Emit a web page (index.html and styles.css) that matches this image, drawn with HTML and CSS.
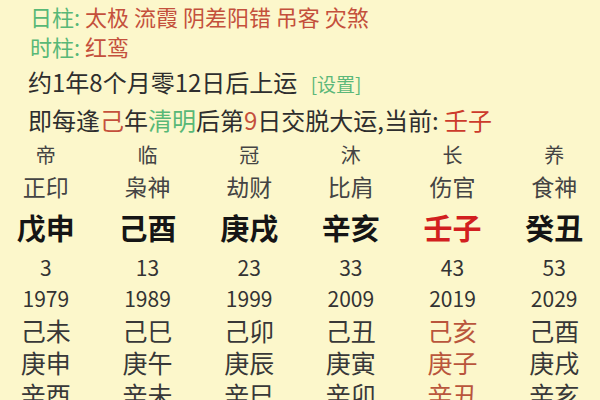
FILE: index.html
```html
<!DOCTYPE html>
<html lang="zh-CN">
<head>
<meta charset="utf-8">
<link rel="stylesheet" href="styles.css">
</head>
<body>
<div class="page">
  <div class="shensha">
    <div class="line"><span class="green">日柱:</span> <span class="red">太极 流霞 阴差阳错 吊客 灾煞</span></div>
    <div class="line"><span class="green">时柱:</span> <span class="red">红鸾</span></div>
  </div>
  <div class="yun">
    <div class="line">约1年8个月零12日后上运 <span class="setting">[设置]</span></div>
    <div class="line">即每逢<span class="red">己</span>年<span class="green">清明</span>后第<span class="red">9</span>日交脱大运,当前: <span class="red cur">壬子</span></div>
  </div>
  <div class="grid">
    <div class="col">
      <div class="c stage">帝</div>
      <div class="c god">正印</div>
      <div class="c gz">戊申</div>
      <div class="c num">3</div>
      <div class="c num">1979</div>
      <div class="c yr">己未</div>
      <div class="c yr">庚申</div>
      <div class="c yr">辛酉</div>
    </div>
    <div class="col">
      <div class="c stage">临</div>
      <div class="c god">枭神</div>
      <div class="c gz">己酉</div>
      <div class="c num">13</div>
      <div class="c num">1989</div>
      <div class="c yr">己巳</div>
      <div class="c yr">庚午</div>
      <div class="c yr">辛未</div>
    </div>
    <div class="col">
      <div class="c stage">冠</div>
      <div class="c god">劫财</div>
      <div class="c gz">庚戌</div>
      <div class="c num">23</div>
      <div class="c num">1999</div>
      <div class="c yr">己卯</div>
      <div class="c yr">庚辰</div>
      <div class="c yr">辛巳</div>
    </div>
    <div class="col">
      <div class="c stage">沐</div>
      <div class="c god">比肩</div>
      <div class="c gz">辛亥</div>
      <div class="c num">33</div>
      <div class="c num">2009</div>
      <div class="c yr">己丑</div>
      <div class="c yr">庚寅</div>
      <div class="c yr">辛卯</div>
    </div>
    <div class="col current">
      <div class="c stage">长</div>
      <div class="c god">伤官</div>
      <div class="c gz">壬子</div>
      <div class="c num">43</div>
      <div class="c num">2019</div>
      <div class="c yr">己亥</div>
      <div class="c yr">庚子</div>
      <div class="c yr">辛丑</div>
    </div>
    <div class="col">
      <div class="c stage">养</div>
      <div class="c god">食神</div>
      <div class="c gz">癸丑</div>
      <div class="c num">53</div>
      <div class="c num">2029</div>
      <div class="c yr">己酉</div>
      <div class="c yr">庚戌</div>
      <div class="c yr">辛亥</div>
    </div>
  </div>
</div>
</body>
</html>
```
FILE: styles.css
```css
html, body {
  margin: 0;
  padding: 0;
  background: #fcf7cb;
}
body {
  width: 600px;
  height: 400px;
  overflow: hidden;
  font-family: "Noto Sans CJK SC", "Noto Sans", sans-serif;
  color: #2e2e2e;
}
.page {
  padding-top: 1px;
}
.shensha {
  padding-left: 30px;
  font-size: 22px;
  line-height: 30px;
}
.yun {
  padding-left: 28px;
  margin-top: 3px;
  font-size: 24px;
  line-height: 36px;
}
.green { color: #58b877; }
.red { color: #c4503c; }
.cur { color: #cc3b2c; }
.setting {
  color: #5cb87a;
  font-size: 19px;
  margin-left: 8px;
}
.grid {
  display: grid;
  grid-template-columns: repeat(6, 1fr);
  margin: 2px -5px 0 -5px;
}
.col {
  display: flex;
  flex-direction: column;
  align-items: center;
}
.c {
  text-align: center;
  white-space: nowrap;
}
.stage {
  font-size: 20px;
  line-height: 30px;
  color: #444;
}
.god {
  font-size: 23px;
  line-height: 32px;
  color: #444;
}
.gz {
  font-size: 29px;
  line-height: 50px;
  font-weight: bold;
  color: #151515;
}
.num {
  font-size: 21px;
  line-height: 31px;
  color: #333;
}
.yr {
  font-size: 25px;
  line-height: 32px;
  color: #383838;
}
.current .gz { color: #d21f1f; }
.current .yr { color: #b9553c; }
```
